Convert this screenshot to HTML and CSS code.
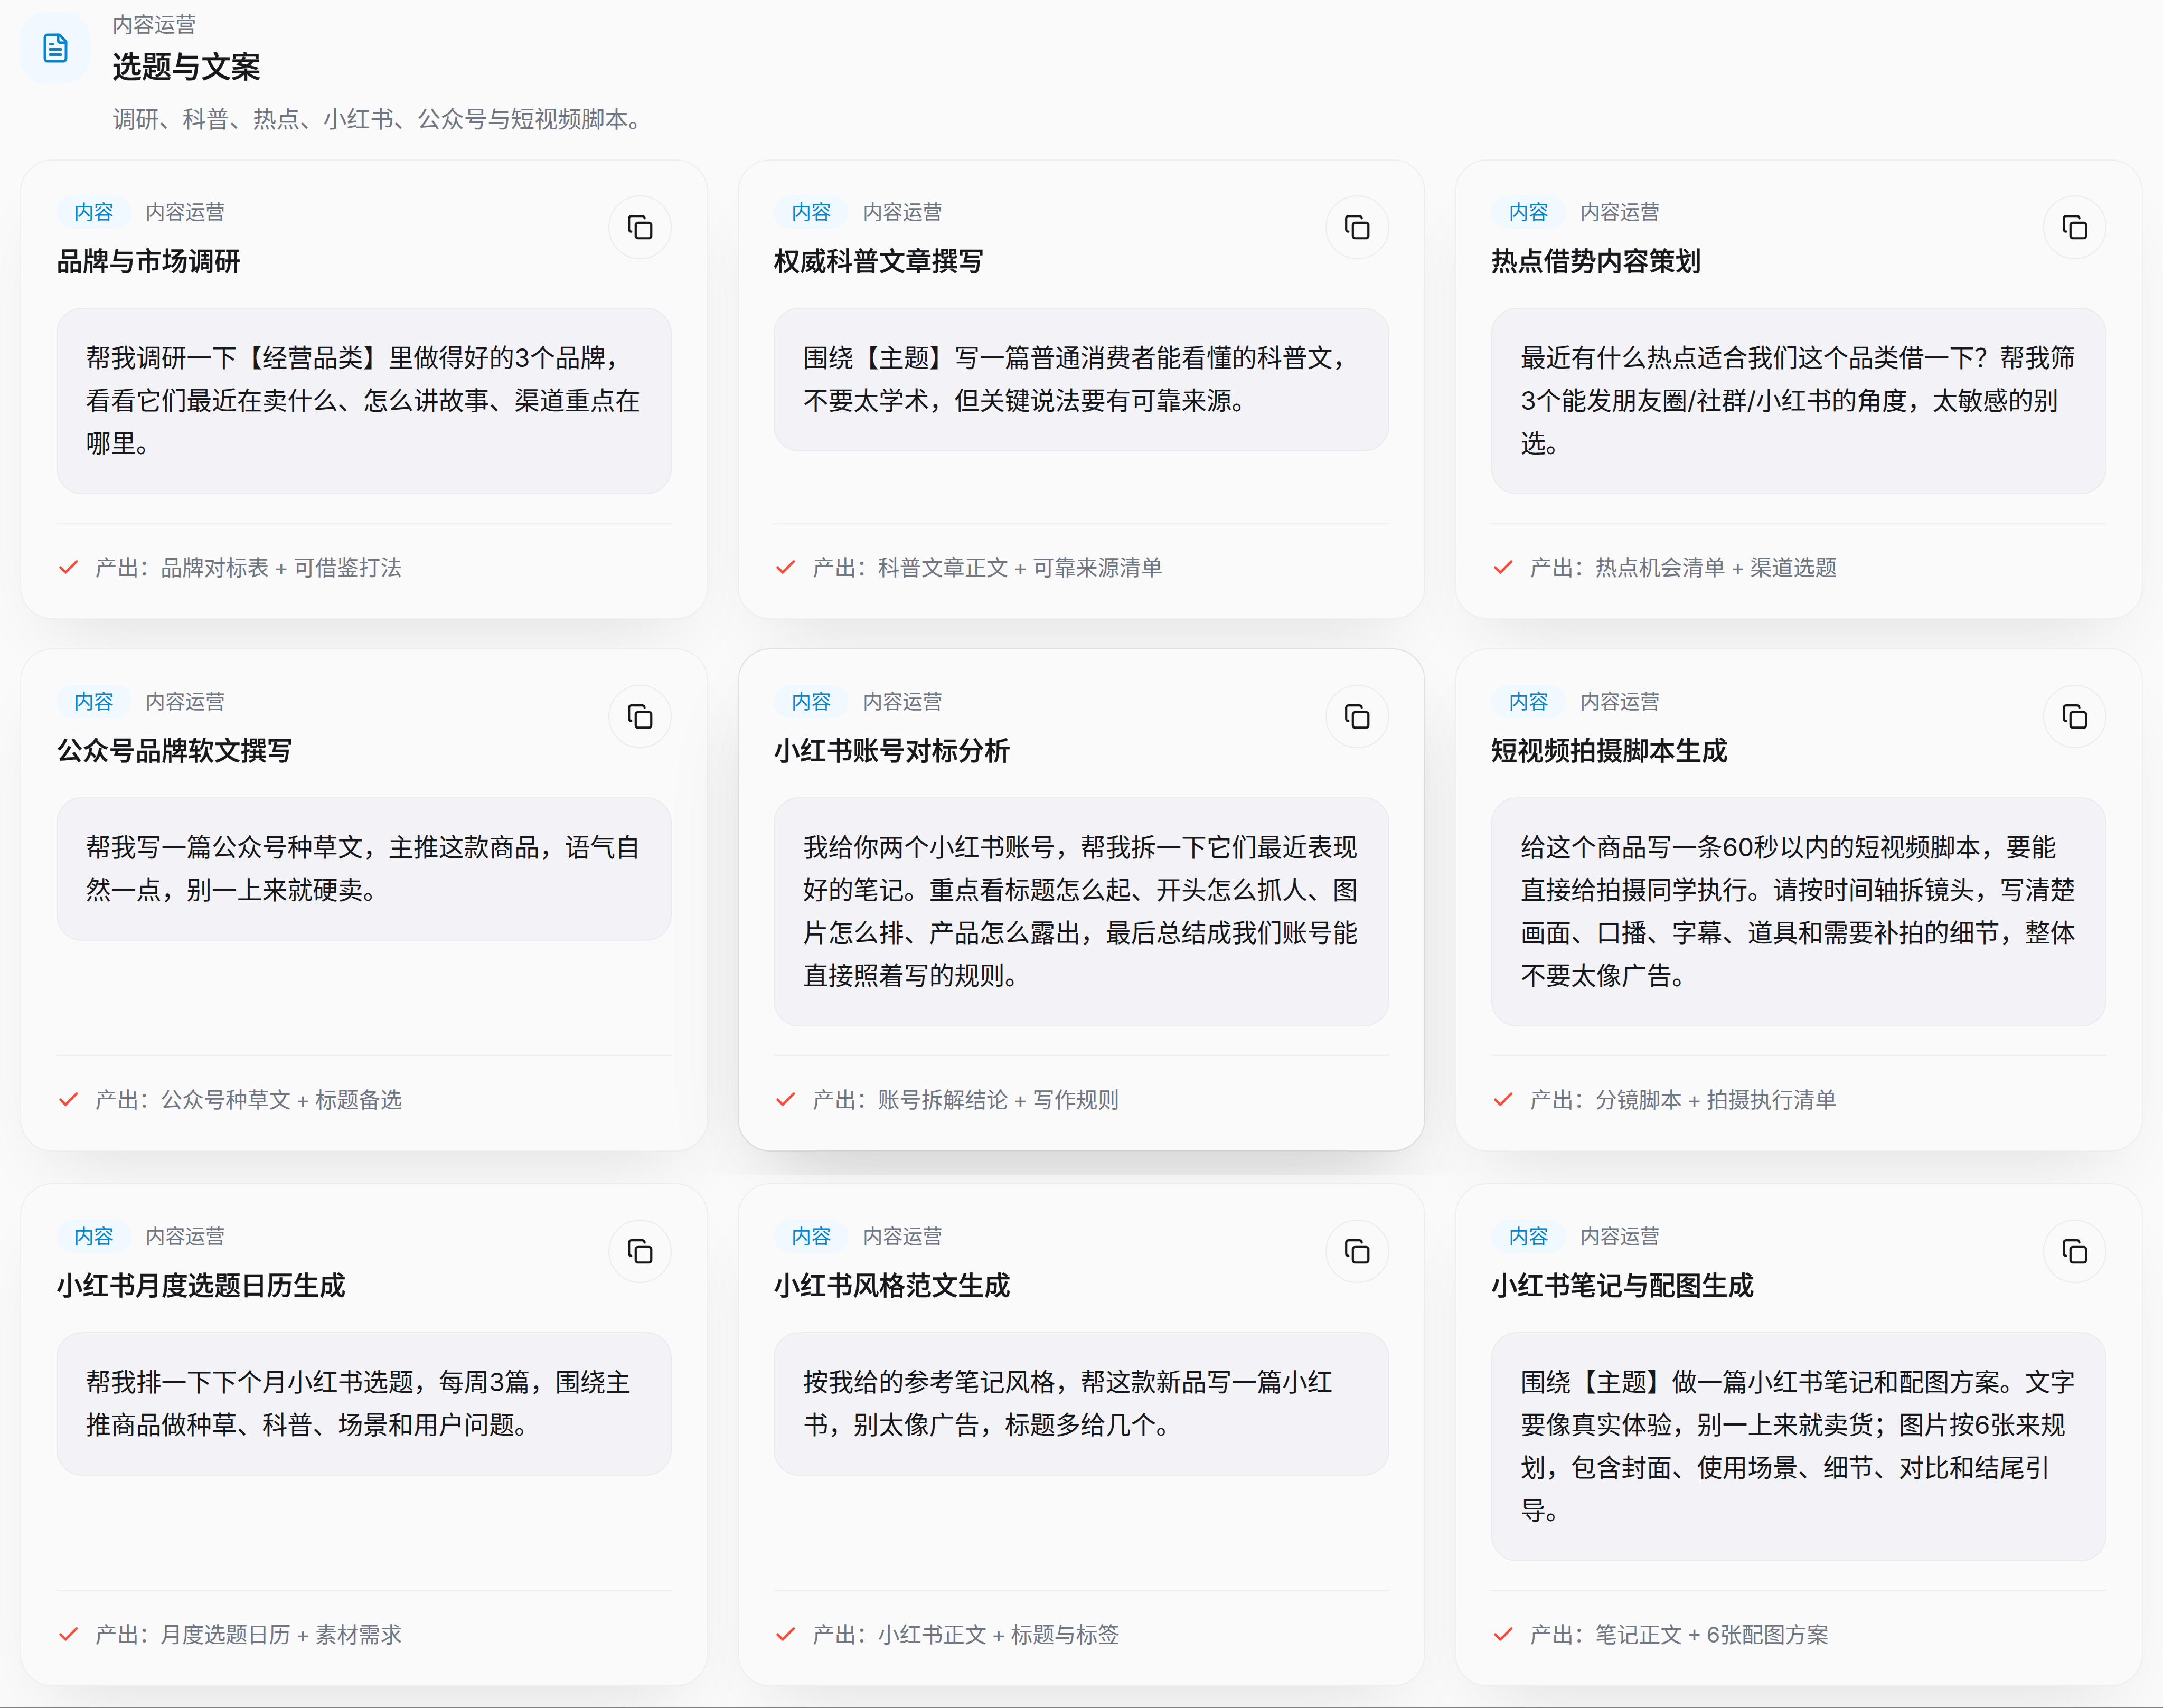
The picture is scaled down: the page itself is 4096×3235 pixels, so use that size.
FILE: index.html
```html
<!DOCTYPE html>
<html lang="zh-CN">
<head>
<meta charset="utf-8">
<title>选题与文案</title>
<link rel="stylesheet" href="styles.css">
</head>
<body>
<svg class="sprite" aria-hidden="true">
  <symbol id="icon-file" viewBox="0 0 24 24"><path d="M15 2H6a2 2 0 0 0-2 2v16a2 2 0 0 0 2 2h12a2 2 0 0 0 2-2V7Z"/><path d="M14 2v4a2 2 0 0 0 2 2h4"/><path d="M10 9H8"/><path d="M16 13H8"/><path d="M16 17H8"/></symbol>
  <symbol id="icon-copy" viewBox="0 0 24 24"><rect x="8" y="8" width="14" height="14" rx="2"/><path d="M4 16c-1.1 0-2-.9-2-2V4c0-1.1.9-2 2-2h10c1.1 0 2 .9 2 2"/></symbol>
  <symbol id="icon-check" viewBox="0 0 24 24"><path d="M20 6 9 17l-5-5"/></symbol>
</svg>
<main class="page">
  <header class="section-head">
    <span class="section-icon"><svg class="icon"><use href="#icon-file"/></svg></span>
    <div class="section-text">
      <p class="eyebrow">内容运营</p>
      <h2 class="section-title">选题与文案</h2>
      <p class="section-desc">调研、科普、热点、小红书、公众号与短视频脚本。</p>
    </div>
  </header>
  <section class="grid">
    <article class="card">
      <div class="card-head">
        <div><div class="meta"><span class="tag">内容</span><span class="category">内容运营</span></div><h3 class="card-title">品牌与市场调研</h3></div>
        <button class="copy"><svg class="icon"><use href="#icon-copy"/></svg></button>
      </div>
      <p class="prompt">帮我调研一下【经营品类】里做得好的3个品牌，<br>看看它们最近在卖什么、怎么讲故事、渠道重点在<br>哪里。</p>
      <footer class="card-foot"><svg class="icon check"><use href="#icon-check"/></svg><span>产出：品牌对标表 + 可借鉴打法</span></footer>
    </article>
    <article class="card">
      <div class="card-head">
        <div><div class="meta"><span class="tag">内容</span><span class="category">内容运营</span></div><h3 class="card-title">权威科普文章撰写</h3></div>
        <button class="copy"><svg class="icon"><use href="#icon-copy"/></svg></button>
      </div>
      <p class="prompt">围绕【主题】写一篇普通消费者能看懂的科普文，<br>不要太学术，但关键说法要有可靠来源。</p>
      <footer class="card-foot"><svg class="icon check"><use href="#icon-check"/></svg><span>产出：科普文章正文 + 可靠来源清单</span></footer>
    </article>
    <article class="card">
      <div class="card-head">
        <div><div class="meta"><span class="tag">内容</span><span class="category">内容运营</span></div><h3 class="card-title">热点借势内容策划</h3></div>
        <button class="copy"><svg class="icon"><use href="#icon-copy"/></svg></button>
      </div>
      <p class="prompt">最近有什么热点适合我们这个品类借一下？帮我筛<br>3个能发朋友圈/社群/小红书的角度，太敏感的别<br>选。</p>
      <footer class="card-foot"><svg class="icon check"><use href="#icon-check"/></svg><span>产出：热点机会清单 + 渠道选题</span></footer>
    </article>
    <article class="card">
      <div class="card-head">
        <div><div class="meta"><span class="tag">内容</span><span class="category">内容运营</span></div><h3 class="card-title">公众号品牌软文撰写</h3></div>
        <button class="copy"><svg class="icon"><use href="#icon-copy"/></svg></button>
      </div>
      <p class="prompt">帮我写一篇公众号种草文，主推这款商品，语气自<br>然一点，别一上来就硬卖。</p>
      <footer class="card-foot"><svg class="icon check"><use href="#icon-check"/></svg><span>产出：公众号种草文 + 标题备选</span></footer>
    </article>
    <article class="card card-active">
      <div class="card-head">
        <div><div class="meta"><span class="tag">内容</span><span class="category">内容运营</span></div><h3 class="card-title">小红书账号对标分析</h3></div>
        <button class="copy"><svg class="icon"><use href="#icon-copy"/></svg></button>
      </div>
      <p class="prompt">我给你两个小红书账号，帮我拆一下它们最近表现<br>好的笔记。重点看标题怎么起、开头怎么抓人、图<br>片怎么排、产品怎么露出，最后总结成我们账号能<br>直接照着写的规则。</p>
      <footer class="card-foot"><svg class="icon check"><use href="#icon-check"/></svg><span>产出：账号拆解结论 + 写作规则</span></footer>
    </article>
    <article class="card">
      <div class="card-head">
        <div><div class="meta"><span class="tag">内容</span><span class="category">内容运营</span></div><h3 class="card-title">短视频拍摄脚本生成</h3></div>
        <button class="copy"><svg class="icon"><use href="#icon-copy"/></svg></button>
      </div>
      <p class="prompt">给这个商品写一条60秒以内的短视频脚本，要能<br>直接给拍摄同学执行。请按时间轴拆镜头，写清楚<br>画面、口播、字幕、道具和需要补拍的细节，整体<br>不要太像广告。</p>
      <footer class="card-foot"><svg class="icon check"><use href="#icon-check"/></svg><span>产出：分镜脚本 + 拍摄执行清单</span></footer>
    </article>
  </section>
  <section class="grid grid-next">
    <article class="card">
      <div class="card-head">
        <div><div class="meta"><span class="tag">内容</span><span class="category">内容运营</span></div><h3 class="card-title">小红书月度选题日历生成</h3></div>
        <button class="copy"><svg class="icon"><use href="#icon-copy"/></svg></button>
      </div>
      <p class="prompt">帮我排一下下个月小红书选题，每周3篇，围绕主<br>推商品做种草、科普、场景和用户问题。</p>
      <footer class="card-foot"><svg class="icon check"><use href="#icon-check"/></svg><span>产出：月度选题日历 + 素材需求</span></footer>
    </article>
    <article class="card">
      <div class="card-head">
        <div><div class="meta"><span class="tag">内容</span><span class="category">内容运营</span></div><h3 class="card-title">小红书风格范文生成</h3></div>
        <button class="copy"><svg class="icon"><use href="#icon-copy"/></svg></button>
      </div>
      <p class="prompt">按我给的参考笔记风格，帮这款新品写一篇小红<br>书，别太像广告，标题多给几个。</p>
      <footer class="card-foot"><svg class="icon check"><use href="#icon-check"/></svg><span>产出：小红书正文 + 标题与标签</span></footer>
    </article>
    <article class="card">
      <div class="card-head">
        <div><div class="meta"><span class="tag">内容</span><span class="category">内容运营</span></div><h3 class="card-title">小红书笔记与配图生成</h3></div>
        <button class="copy"><svg class="icon"><use href="#icon-copy"/></svg></button>
      </div>
      <p class="prompt">围绕【主题】做一篇小红书笔记和配图方案。文字<br>要像真实体验，别一上来就卖货；图片按6张来规<br>划，包含封面、使用场景、细节、对比和结尾引<br>导。</p>
      <footer class="card-foot"><svg class="icon check"><use href="#icon-check"/></svg><span>产出：笔记正文 + 6张配图方案</span></footer>
    </article>
  </section>
</main>
</body>
</html>
```
FILE: styles.css
```css
:root {
  --bg: #fafafa;
  --ink: #17181b;
  --muted: #717683;
  --line: #eeeeee;
  --accent: #0a85cb;
  --accent-soft: #f0f9ff;
}

/* 41.25rem spans the window width */
html { font-size: calc(100vw / 41.25); }

* { box-sizing: border-box; margin: 0; padding: 0; }

body {
  background: var(--bg);
  color: var(--ink);
  font-family: Inter, "Noto Sans CJK SC", sans-serif;
  font-size: .48rem;
  text-spacing-trim: space-all;
  overflow: hidden;
}

.sprite { display: none; }

.icon {
  display: block;
  flex: none;
  fill: none;
  stroke: currentColor;
  stroke-width: 2;
  stroke-linecap: round;
  stroke-linejoin: round;
}

.page {
  height: 100vh;
  padding: .2rem .385rem 0;
  overflow: hidden;
  border-bottom: .02rem solid #808080;
}

.section-head {
  display: flex;
  gap: .41rem;
  height: 2.837rem;
}

.section-icon {
  display: grid;
  place-items: center;
  width: 1.342rem;
  height: 1.36rem;
  margin-top: .035rem;
  border-radius: .5rem;
  background: var(--accent-soft);
  color: var(--accent);
}
.section-icon .icon { width: .604rem; height: .604rem; }

.eyebrow { font-size: .402rem; line-height: .54rem; color: var(--muted); }
.section-title { margin-top: .175rem; font-size: .567rem; font-weight: 500; line-height: .73rem; -webkit-text-stroke: .006rem; }
.section-desc { margin-top: .255rem; font-size: .4476rem; line-height: .76rem; color: var(--muted); }

.grid {
  display: grid;
  grid-template-columns: repeat(3, minmax(0, 1fr));
  gap: .552rem .564rem;
}

.grid-next { margin-top: .608rem; }

.card {
  position: relative;
  display: flex;
  flex-direction: column;
  padding: .67rem .67rem .685rem;
  border: .025rem solid var(--line);
  border-radius: .62rem;
  background: var(--bg);
  box-shadow: 0 .7rem 1.35rem -.62rem rgba(0, 0, 0, .115);
}

.card-active { border-color: #e2e2e3; }

/* extra lift of the hovered card, kept off the row below */
.card-active::before {
  content: "";
  position: absolute;
  inset: 0;
  border-radius: inherit;
  box-shadow: 0 .8rem 2rem -.5rem rgba(0, 0, 0, .11);
  clip-path: inset(-2rem -2rem -.47rem);
  pointer-events: none;
}

.card-head {
  display: flex;
  justify-content: space-between;
  align-items: flex-start;
  height: 2.147rem;
}

.meta { display: flex; align-items: center; gap: .27rem; font-size: .38rem; line-height: .635rem; }
.tag { padding: 0 .334rem; border-radius: 1rem; background: var(--accent-soft); color: var(--accent); }
.category { color: var(--muted); }
.card-title { margin-top: .302rem; font-size: .502rem; font-weight: 500; line-height: .65rem; -webkit-text-stroke: .005rem; }

.copy {
  display: grid;
  place-items: center;
  flex: none;
  width: 1.215rem;
  height: 1.215rem;
  border: .025rem solid #ececec;
  border-radius: 50%;
  background: var(--bg);
  color: var(--ink);
}
.copy .icon { width: .508rem; height: .508rem; }

.prompt {
  margin-bottom: .55rem;
  padding: .536rem .54rem .532rem;
  border: .025rem solid #ebebee;
  border-radius: .49rem;
  background: #f3f2f7;
  font-size: .481rem;
  line-height: .815rem;
  white-space: nowrap;
}

/* pinned to the bottom so dividers line up across a row */
.card-foot {
  display: flex;
  align-items: center;
  gap: .285rem;
  margin-top: auto;
  padding-top: .55rem;
  border-top: .025rem solid var(--line);
  color: var(--muted);
  font-size: .414rem;
  line-height: .564rem;
  word-spacing: -.02rem;
}
.check { width: .46rem; height: .46rem; color: #fa4b3c; stroke-width: 2.5; }
```
